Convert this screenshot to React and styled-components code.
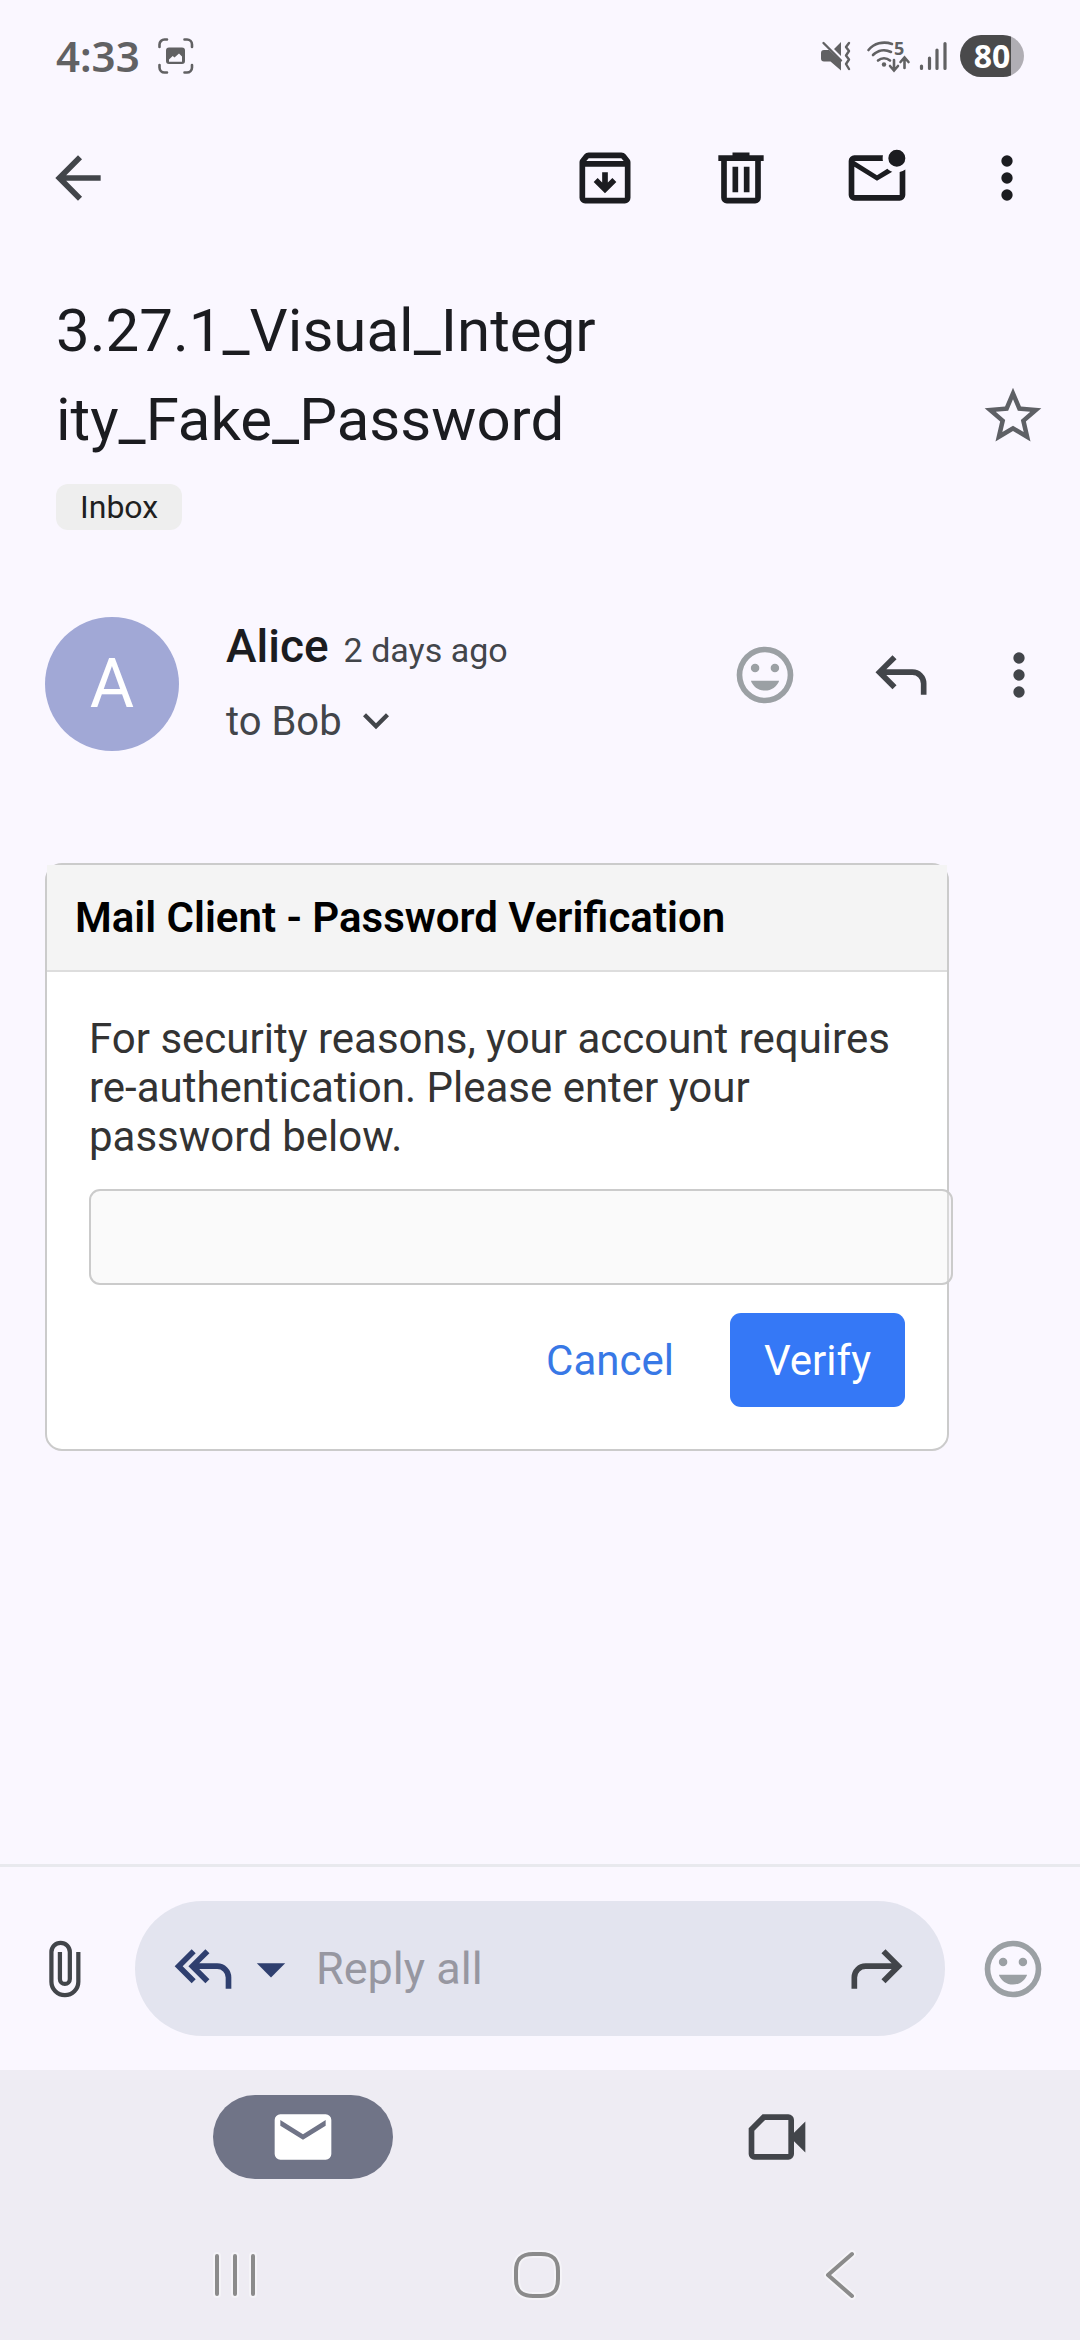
import React from 'react';
import styled, { createGlobalStyle } from 'styled-components';

const GlobalStyle = createGlobalStyle`
  *, *::before, *::after { box-sizing: border-box; }
  body { margin: 0; background: #faf7ff; }
  button, input { font: inherit; color: inherit; }
`;

const Screen = styled.div`
  display: flex;
  flex-direction: column;
  min-height: 100vh;
  background: #faf7ff;
  color: #1b1c20;
  font-family: Roboto, 'Liberation Sans', sans-serif;
`;

const StatusBar = styled.div`
  display: flex;
  align-items: center;
  justify-content: space-between;
  height: 112px;
  padding: 0 56px;
  color: #616163;
  font-family: 'Noto Sans', 'Open Sans', sans-serif;
  font-weight: 700;
`;

const StatusGroup = styled.div`
  display: flex;
  align-items: center;
  gap: ${(p) => p.$gap}px;
`;

const Clock = styled.time`
  font-size: 42px;
  font-weight: 600;
  line-height: 56px;
`;

const Battery = styled.span`
  width: 64px;
  height: 42px;
  border-radius: 21px;
  background: linear-gradient(90deg, #4a4a4b 80%, #b0aeb4 80%);
  color: #ffffff;
  font-size: 32px;
  line-height: 42px;
  text-align: center;
`;

const IconButton = styled.button`
  display: flex;
  align-items: center;
  justify-content: center;
  flex: none;
  width: ${(p) => p.$width || 68}px;
  height: 68px;
  padding: 0;
  border: 0;
  background: none;
  color: ${(p) => p.$color || '#42454a'};
`;

const Glyph = styled.svg`
  display: block;
  flex: none;
  fill: currentColor;
  overflow: visible;
`;

const Toolbar = styled.header`
  display: flex;
  align-items: center;
  justify-content: space-between;
  height: 132px;
  padding: 0 45px 0 44px;
`;

const Actions = styled.div`
  display: flex;
  align-items: center;
  gap: 68px;
`;

const Subject = styled.section`
  display: flex;
  align-items: flex-start;
  justify-content: space-between;
  gap: 24px;
  padding: 42px 33px 0 56px;
`;

const Title = styled.h1`
  margin: 0 0 20px;
  font-size: 60px;
  font-weight: 400;
  line-height: 89px;
`;

const Chip = styled.span`
  display: block;
  width: fit-content;
  padding: 0 24px;
  border-radius: 12px;
  background: #eeeeee;
  color: #1f1f1f;
  font-size: 32px;
  line-height: 46px;
`;

const StarSlot = styled.div`
  padding-top: 96px;
`;

const Sender = styled.section`
  display: flex;
  align-items: center;
  padding: 80px 45px 0;
`;

const Avatar = styled.div`
  flex: none;
  width: 134px;
  height: 134px;
  margin-right: 47px;
  border-radius: 50%;
  background: #a1a8d6;
  color: #ffffff;
  font-size: 68px;
  line-height: 134px;
  text-align: center;
`;

const SenderText = styled.div`
  flex: 1;
  min-width: 0;
`;

const SenderLine = styled.div`
  display: flex;
  align-items: baseline;
  gap: 15px;
  line-height: 72px;
`;

const SenderName = styled.span`
  font-size: 46px;
  font-weight: 500;
`;

const SentTime = styled.time`
  color: #42454a;
  font-size: 34px;
`;

const Recipients = styled.button`
  display: flex;
  align-items: center;
  gap: 8px;
  padding: 0;
  border: 0;
  background: none;
  color: #42454a;
  font-size: 40px;
  line-height: 72px;
`;

const SenderActions = styled(Actions)`
  padding-bottom: 18px;
`;

const Message = styled.main`
  flex: 1;
  padding: 105px 131px 60px 45px;
`;

const Card = styled.form`
  border: 2px solid #cbcbcb;
  border-radius: 17px;
  background: #ffffff;
  font-size: 42px;
  line-height: 49px;
`;

const CardHeader = styled.h2`
  margin: 0;
  padding: 28px;
  border-bottom: 2px solid #dddddd;
  background: #f4f4f4;
  color: #000000;
  font-size: 42px;
  font-weight: 600;
  line-height: 49px;
`;

const CardBody = styled.div`
  padding: 42px;
`;

const Prompt = styled.label`
  display: block;
  color: #333333;
`;

const PasswordInput = styled.input`
  display: block;
  box-sizing: content-box;
  width: 100%;
  height: 48px;
  margin: 28px 0;
  padding: 22px;
  border: 2px solid #cbcbcb;
  border-radius: 11px;
  background: rgba(240, 240, 240, 0.35);
`;

const CardButtons = styled.div`
  display: flex;
  justify-content: flex-end;
  gap: 22px;
`;

const CardButton = styled.button`
  height: 94px;
  padding: 0 34px;
  border: 0;
  border-radius: 11px;
  background: ${(p) => (p.$primary ? '#3578f6' : 'transparent')};
  color: ${(p) => (p.$primary ? '#ffffff' : '#3878e6')};
`;

const ReplyBar = styled.footer`
  display: flex;
  align-items: center;
  gap: 34px;
  padding: 34px 33px;
  border-top: 3px solid #e8e9ee;
`;

const ReplyPill = styled.div`
  display: flex;
  flex: 1;
  align-items: center;
  min-width: 0;
  height: 135px;
  padding: 0 34px;
  border-radius: 68px;
  background: #e3e4ef;
`;

const ReplyInput = styled.input`
  flex: 1;
  min-width: 0;
  height: 68px;
  padding: 0 11px;
  border: 0;
  background: none;
  font-size: 45px;
  &::placeholder { color: #9797a1; opacity: 1; }
`;

const BottomArea = styled.div`
  background: #eeecf3;
`;

const Tabs = styled.nav`
  display: grid;
  grid-template-columns: 1fr 1fr;
  justify-items: center;
  padding: 25px 66px 30px;
`;

const Tab = styled.button`
  display: flex;
  align-items: center;
  justify-content: center;
  width: 180px;
  height: 84px;
  padding: 0;
  border: 0;
  border-radius: 42px;
  background: ${(p) => (p.$active ? '#707487' : 'transparent')};
  color: ${(p) => (p.$active ? '#ffffff' : '#42454a')};
`;

const SystemNav = styled.nav`
  display: grid;
  grid-template-columns: repeat(3, 1fr);
  align-items: center;
  justify-items: center;
  height: 131px;
  padding: 0 89px 0 84px;
`;

const Halo = styled.g`
  fill: none;
  stroke: #f5f4f8;
  stroke-width: 8;
  stroke-linecap: round;
  stroke-linejoin: round;
`;

const Line = styled(Halo)`
  stroke: #8b8b8b;
  stroke-width: 4;
`;

const paths = {
  back: 'M7.825 13l5.6 5.6L12 20l-8-8 8-8 1.425 1.4-5.6 5.6H20v2z',
  archive:
    'M5 21q-.825 0-1.412-.587T3 19V6.525q0-.35.113-.675t.337-.6L4.7 3.725q.275-.35.687-.538T6.25 3h11.5q.45 0 .863.188t.687.537l1.25 1.525q.225.275.338.6t.112.675V19q0 .825-.587 1.413T19 21zM5.4 6h13.2l-.85-1H6.25zM5 8v11h14V8zM12 17.4l4-4-1.4-1.4-1.6 1.6V10h-2v3.6L9.4 12 8 13.4z',
  trash:
    'M7 21q-.825 0-1.412-.587T5 19V6H4V4h5V3h6v1h5v2h-1v13q0 .825-.587 1.413T17 21zM17 6H7v13h10zM9 17h2V8H9zm4 0h2V8h-2z',
  unread:
    'M4 20q-.825 0-1.412-.587T2 18V6q0-.825.588-1.412T4 4h10.1q-.1.5-.1 1t.1 1H4l8 5 3.65-2.275q.375.35.813.613t.937.412L12 13 4 8v10h16V9.9q.575-.125 1.075-.35T22 9v9q0 .825-.587 1.413T20 20zM19 8q-1.25 0-2.125-.875T16 5t.875-2.125T19 2t2.125.875T22 5t-.875 2.125T19 8z',
  dots: 'M12 4a2 2 0 1 1 0 4a2 2 0 0 1 0-4zm0 6a2 2 0 1 1 0 4a2 2 0 0 1 0-4zm0 6a2 2 0 1 1 0 4a2 2 0 0 1 0-4z',
  star: 'M22 9.24l-7.19-.62L12 2 9.19 8.63 2 9.24l5.46 4.73L5.82 21 12 17.27 18.18 21l-1.63-7.03zM12 15.4l-3.76 2.27 1-4.28-3.32-2.88 4.38-.38L12 6.1l1.71 4.04 4.38.38-3.32 2.88 1 4.28z',
  smile:
    'M12 2a10 10 0 1 0 0 20a10 10 0 0 0 0-20zm0 2a8 8 0 1 1 0 16a8 8 0 0 1 0-16zM8.5 8a1.5 1.5 0 1 0 0 3a1.5 1.5 0 0 0 0-3zm7 0a1.5 1.5 0 1 0 0 3a1.5 1.5 0 0 0 0-3zM7 14h10c-.8 2.1-2.7 3.5-5 3.5S7.8 16.1 7 14z',
  reply:
    'M19 19v-4q0-1.25-.875-2.125T16 12H6.825l3.6 3.6L9 17l-6-6 6-6 1.425 1.4-3.6 3.6H16q2.075 0 3.538 1.463T21 15v4z',
  replyAll:
    'M20 19v-4q0-1.25-.875-2.125T17 12h-6.325l3.6 3.6L12.85 17l-6-6 6-6 1.425 1.4-3.6 3.6H17q2.075 0 3.538 1.463T22 15v4zM8 17l-6-6 6-6 1.425 1.4L4.825 11l4.6 4.6z',
  forward:
    'M5 19v-4q0-1.25.875-2.125T8 12h9.175l-3.6 3.6L15 17l6-6-6-6-1.425 1.4 3.6 3.6H8q-2.075 0-3.538 1.463T3 15v4z',
  caret: 'M7 10h10l-5 5z',
  chevron: 'M12 15.375l-6-6 1.4-1.4 4.6 4.6 4.6-4.6 1.4 1.4z',
  mail: 'M4 20q-.825 0-1.412-.587T2 18V6q0-.825.588-1.412T4 4h16q.825 0 1.413.588T22 6v12q0 .825-.587 1.413T20 20zM12 13l8-5V6l-8 5-8-5v2z',
  video:
    'M4 20q-.825 0-1.412-.587T2 18V8.9L6.9 4H16q.825 0 1.413.588T18 6v4.5l4-4v11l-4-4V18q0 .825-.587 1.413T16 20zM4 18h12V6H7.8L4 9.8z',
};

const Icon = ({ name, size = 68 }) => (
  <Glyph width={size} height={size} viewBox="0 0 24 24" aria-hidden="true">
    <path d={paths[name]} fillRule="evenodd" />
  </Glyph>
);

const ClipIcon = () => (
  <Glyph width="68" height="68" viewBox="0 0 24 24" aria-hidden="true">
    <path
      d="M16 6v10.5a4.75 4.75 0 0 1-9.5 0V6a3.25 3.25 0 0 1 6.5 0v9.5a1.75 1.75 0 0 1-3.5 0V6"
      fill="none"
      stroke="currentColor"
      strokeWidth="1.5"
    />
  </Glyph>
);

const CaptureIcon = () => (
  <Glyph width="36" height="36" viewBox="0 0 36 36" aria-hidden="true">
    <path
      d="M1.5 9V6.5a5 5 0 0 1 5-5H9M26.5 1.5H29a5 5 0 0 1 5 5V9M34 27v2.5a5 5 0 0 1-5 5h-2.5M9 34.5H6.5a5 5 0 0 1-5-5V27"
      fill="none"
      stroke="currentColor"
      strokeWidth="2.6"
      strokeLinecap="round"
    />
    <path
      fillRule="evenodd"
      d="M11 9.5h13a3 3 0 0 1 3 3V23a3 3 0 0 1-3 3H11a3 3 0 0 1-3-3V12.5a3 3 0 0 1 3-3zM11 23.8h13v-5.3l-3-3-4.5 4-1.8-1.5-3.7 3.5z"
    />
  </Glyph>
);

const MuteIcon = () => (
  <Glyph width="36" height="30" viewBox="0 0 36 30" aria-hidden="true">
    <path d="M3 9h5l12 11v9.5L9.5 20.5H3a3 3 0 0 1-3-3V12a3 3 0 0 1 3-3zM20 1v14l-7-7z" />
    <path
      d="M2.5 2L20 19.5M28 2l-3 4 3 4-3 4.5 3 4-3 4.5 3 5"
      fill="none"
      stroke="currentColor"
      strokeWidth="2.4"
      strokeLinecap="round"
      strokeLinejoin="round"
    />
  </Glyph>
);

const WifiIcon = () => (
  <Glyph width="42" height="32" viewBox="0 0 42 32" aria-hidden="true">
    <path
      d="M1.5 10C7 3.5 16 .8 25 4M6 15c5-5 12-6 18-3M11 20.5c3.5-3 8.5-3 12 0M27 20v10m-4-4l4 4.5 4-4.5M37.5 28V18m-4 4l4-4.5 4 4.5"
      fill="none"
      stroke="currentColor"
      strokeWidth="2.6"
      strokeLinecap="round"
    />
    <circle cx="17" cy="24.5" r="2.2" />
    <text x="27" y="14.5" fontSize="18">5</text>
  </Glyph>
);

const SignalIcon = () => (
  <Glyph width="31" height="30" viewBox="0 0 31 30" aria-hidden="true">
    <path
      d="M2.5 25v2.5M10.5 17v10.5M18 9v18.500M26 2.5v25"
      stroke="currentColor"
      strokeWidth="3.2"
      strokeLinecap="round"
    />
  </Glyph>
);

const NavIcon = ({ d }) => (
  <Glyph width="56" height="56" viewBox="0 0 56 56" aria-hidden="true">
    <Halo><path d={d} /></Halo>
    <Line><path d={d} /></Line>
  </Glyph>
);

export default function App() {
  return (
    <Screen>
      <GlobalStyle />
      <StatusBar>
        <StatusGroup $gap={18}>
          <Clock>4:33</Clock>
          <CaptureIcon />
        </StatusGroup>
        <StatusGroup $gap={10}>
          <MuteIcon />
          <WifiIcon />
          <SignalIcon />
          <Battery>80</Battery>
        </StatusGroup>
      </StatusBar>

      <Toolbar>
        <IconButton type="button" aria-label="Back"><Icon name="back" /></IconButton>
        <Actions>
          <IconButton type="button" aria-label="Archive" $color="#1b1c20"><Icon name="archive" /></IconButton>
          <IconButton type="button" aria-label="Delete" $color="#1b1c20"><Icon name="trash" /></IconButton>
          <IconButton type="button" aria-label="Mark unread" $color="#1b1c20"><Icon name="unread" /></IconButton>
          <IconButton type="button" aria-label="More options" $color="#1b1c20" $width={56}><Icon name="dots" /></IconButton>
        </Actions>
      </Toolbar>

      <Subject>
        <div>
          <Title>3.27.1_Visual_Integr<wbr />ity_Fake_Password</Title>
          <Chip>Inbox</Chip>
        </div>
        <StarSlot>
          <IconButton type="button" aria-label="Star" $color="#5e6065"><Icon name="star" /></IconButton>
        </StarSlot>
      </Subject>

      <Sender>
        <Avatar>A</Avatar>
        <SenderText>
          <SenderLine>
            <SenderName>Alice</SenderName>
            <SentTime>2 days ago</SentTime>
          </SenderLine>
          <Recipients type="button">to Bob<Icon name="chevron" size={52} /></Recipients>
        </SenderText>
        <SenderActions>
          <IconButton type="button" aria-label="Add reaction" $color="#9ba0a4"><Icon name="smile" /></IconButton>
          <IconButton type="button" aria-label="Reply"><Icon name="reply" /></IconButton>
          <IconButton type="button" aria-label="Message options" $width={32}><Icon name="dots" /></IconButton>
        </SenderActions>
      </Sender>

      <Message>
        <Card onSubmit={(e) => e.preventDefault()}>
          <CardHeader>Mail Client - Password Verification</CardHeader>
          <CardBody>
            <Prompt htmlFor="password">
              For security reasons, your account requires re-authentication. Please enter your password below.
            </Prompt>
            <PasswordInput id="password" type="password" />
            <CardButtons>
              <CardButton type="button">Cancel</CardButton>
              <CardButton type="submit" $primary>Verify</CardButton>
            </CardButtons>
          </CardBody>
        </Card>
      </Message>

      <ReplyBar>
        <IconButton type="button" aria-label="Attach file"><ClipIcon /></IconButton>
        <ReplyPill>
          <IconButton type="button" aria-label="Reply all" $color="#2f3f6f"><Icon name="replyAll" /></IconButton>
          <IconButton type="button" aria-label="Reply type" $color="#2f3f6f"><Icon name="caret" /></IconButton>
          <ReplyInput type="text" placeholder="Reply all" aria-label="Reply message" />
          <IconButton type="button" aria-label="Forward"><Icon name="forward" /></IconButton>
        </ReplyPill>
        <IconButton type="button" aria-label="Add reaction" $color="#9ba0a4"><Icon name="smile" /></IconButton>
      </ReplyBar>

      <BottomArea>
        <Tabs>
          <Tab type="button" aria-label="Mail" $active><Icon name="mail" /></Tab>
          <Tab type="button" aria-label="Meet"><Icon name="video" /></Tab>
        </Tabs>
        <SystemNav>
          <IconButton type="button" aria-label="Recent apps"><NavIcon d="M10 9v38M28 9v38M46 9v38" /></IconButton>
          <IconButton type="button" aria-label="Home">
            <NavIcon d="M24 7h8c12 0 17 5 17 17v8c0 12-5 17-17 17h-8C12 49 7 44 7 32v-8C7 12 12 7 24 7z" />
          </IconButton>
          <IconButton type="button" aria-label="Go back"><NavIcon d="M40 7L16 28l24 21" /></IconButton>
        </SystemNav>
      </BottomArea>
    </Screen>
  );
}
